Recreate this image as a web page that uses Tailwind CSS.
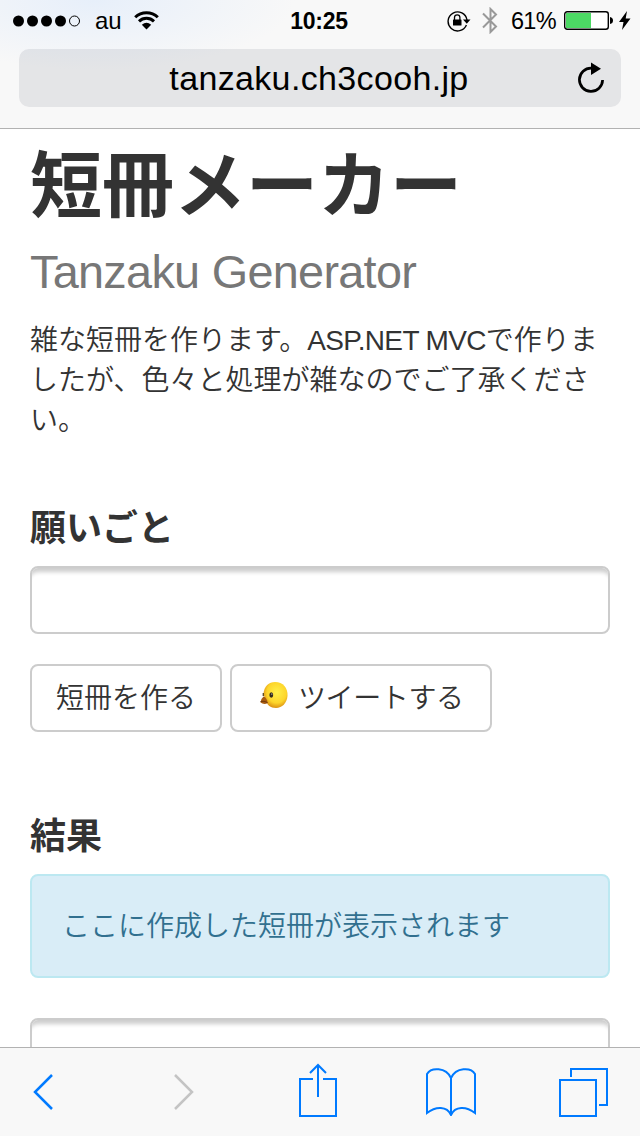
<!DOCTYPE html>
<html lang="ja">

<head>
    <meta charset="UTF-8">
    <meta name="viewport" content="width=device-width, initial-scale=1.0">
    <title>短冊メーカー</title>

    <!-- Tailwind CSS -->
    <script src="https://cdn.jsdelivr.net/npm/@tailwindcss/browser@4"></script>
</head>

<body class="font-['Liberation_Sans','Noto_Sans_CJK_JP',sans-serif] text-[28px] text-[#333] bg-white">

    <div class="flex flex-col w-[640px] h-[1136px] overflow-hidden">

        <!-- Status bar + address bar -->
        <header class="h-[129px] shrink-0 border-b border-[#b2b2b2] bg-[#f8f8f8] bg-[radial-gradient(ellipse_200px_70px_at_95px_0px,#e7effa,#f8f8f8)] text-black">
            <div class="grid grid-cols-[1fr_auto_1fr] items-center h-[41px] text-2xl leading-none">
                <div class="flex items-center pl-[13px]">
                    <svg class="w-[68px] h-3" viewBox="0 0 68 12">
                        <circle cx="5.5" cy="6" r="5.5" />
                        <circle cx="19.5" cy="6" r="5.5" />
                        <circle cx="33.5" cy="6" r="5.5" />
                        <circle cx="47.5" cy="6" r="5.5" />
                        <circle cx="61.5" cy="6" r="5" fill="none" stroke="#000" />
                    </svg>
                    <span class="ml-3.5 w-[39px]">au</span>
                    <svg class="w-[25px] h-[19px]" viewBox="0 0 25 19">
                        <path d="M1.2 6.3C7.5.1 17.5.1 23.8 6.3" fill="none" stroke="#000" stroke-width="3" />
                        <path d="M5 10.3C9.2 6.3 15.8 6.3 20 10.3" fill="none" stroke="#000" stroke-width="3" />
                        <path d="M12.5 18.5L7.8 13.7Q12.5 9.9 17.2 13.7Z" />
                    </svg>
                </div>
                <div class="font-bold text-[23px] tracking-[-0.3px] pr-0.5 pt-0.5">10:25</div>
                <div class="flex items-center justify-end pr-[9px]">
                    <svg class="w-6 h-[22px]" viewBox="0 0 24 22">
                        <path d="M19.4 15A9.5 9.5 0 1 1 20 10" fill="none" stroke="#000" stroke-width="1.4" />
                        <path d="M16 9.5h7.500l-3.700 4.200Z" />
                        <rect x="6" y="9.5" width="8.5" height="6" rx=".6" />
                        <path d="M7.5 10V7.500a2.700 2.700 0 0 1 5.400 0V10" fill="none" stroke="#000" stroke-width="1.3" />
                    </svg>
                    <svg class="w-4 h-[27px] ml-[11px]" viewBox="0 0 16 27" fill="none" stroke="#999" stroke-width="2">
                        <path d="M1 6.5L14 19.5L8.5 25V2L14 7.5L1 20.5" />
                    </svg>
                    <span class="ml-[13px] mt-0.5 w-[53px] text-[23.5px] tracking-[-0.7px]">61%</span>
                    <svg class="w-[49px] h-[19px]" viewBox="0 0 49 19">
                        <rect x=".7" y=".7" width="43.6" height="17.6" rx="2.5" fill="#fff" stroke="#000" stroke-width="1.4" />
                        <rect x="2" y="2" width="25" height="15" fill="#4cd964" />
                        <path d="M46 6q3 .5 3 3.500t-3 3.500Z" />
                    </svg>
                    <svg class="w-3 h-[19px] ml-1.5" viewBox="0 0 12 19">
                        <path d="M8 0L0 11h4.500L3 19L11.500 7.500H6.700Z" />
                    </svg>
                </div>
            </div>
            <div class="mt-2 mx-[19px] h-[58px] rounded-[10px] bg-[#00082a]/8 grid grid-cols-[1fr_auto_1fr] items-center">
                <div></div>
                <div class="text-[34px] leading-none tracking-[0.35px] pr-0.5">tanzaku.ch3cooh.jp</div>
                <svg class="w-[27px] h-[31px] justify-self-end mr-4 mb-0.5" viewBox="0 0 27 31">
                    <path d="M13.5 6.2A11.6 11.6 0 1 0 24.600 18" fill="none" stroke="#000" stroke-width="2.7" />
                    <path d="M13 .5v12.500L23 6.700Z" />
                </svg>
            </div>
        </header>

        <!-- Page -->
        <main class="flex-1 min-h-0 overflow-hidden px-[30px] pt-[17px]">
            <h1 class="text-[72px] leading-[80px] font-bold">短冊メーカー</h1>
            <p class="mt-[18px] text-[46.8px] leading-[56px] text-[#777] tracking-[-0.7px]">Tanzaku Generator</p>
            <p class="mt-[21px] leading-10 whitespace-nowrap font-[350]">
                雑な短冊を作ります。<span class="tracking-[-0.65px]">ASP.NET MVC</span>で作りま<br>
                したが、色々と処理が雑なのでご了承くださ<br>
                い。
            </p>

            <h3 class="mt-[68px] text-4xl leading-10 font-bold">願いごと</h3>
            <input type="text" class="block mt-[17px] w-full h-[68px] rounded-lg border-2 border-[#ccc] shadow-[inset_0_8px_4px_-4px_rgba(0,0,0,0.2)]">
            <div class="mt-[30px] flex gap-2">
                <button class="w-48 h-[68px] rounded-lg border-2 border-[#ccc] font-[350] pt-0.5">短冊を作る</button>
                <button class="w-[262px] h-[68px] rounded-lg border-2 border-[#ccc] font-[350] flex items-center pl-7 pt-0.5">
                    <svg class="w-7 h-7 mr-2.5 mb-2" viewBox="0 0 28 28">
                        <defs>
                            <radialGradient id="chick" cx=".55" cy=".4" r=".62">
                                <stop offset="0" stop-color="#fff04a" />
                                <stop offset=".65" stop-color="#fdd52b" />
                                <stop offset="1" stop-color="#d98b10" />
                            </radialGradient>
                        </defs>
                        <path d="M3.5 13C4 5 9 1 15 1C23 1 28 7 27.5 15C27 22 22 27 16 27C10 27 7.5 24 6 20Z" fill="url(#chick)" />
                        <path d="M3.5 15.5Q6.5 16 7.8 22Q4 24 .5 21.5Q1 17.5 3.5 15.5Z" fill="#a85c12" />
                        <path d="M.5 20.5Q4 19.5 7.5 21.5" fill="none" stroke="#70380a" />
                        <ellipse cx="11.3" cy="14" rx="1.9" ry="2.7" fill="#332b1c" />
                        <circle cx="11.8" cy="13" r=".6" fill="#fff" />
                        <path d="M3.3 12v3" stroke="#554322" stroke-width="1.3" />
                    </svg>
                    <span class="tracking-[-0.4px]">ツイートする</span>
                </button>
            </div>

            <h3 class="mt-[85px] text-4xl leading-10 font-bold">結果</h3>
            <div class="mt-[17px] h-[104px] rounded-lg border-2 border-[#bce8f1] bg-[#d9edf7] text-[#31708f] font-[350] px-[30px] pt-0.5 flex items-center">ここに作成した短冊が表示されます</div>
            <textarea class="block mt-10 w-full h-[160px] resize-none rounded-lg border-2 border-[#ccc] shadow-[inset_0_8px_4px_-4px_rgba(0,0,0,0.2)]"></textarea>
        </main>

        <!-- Toolbar -->
        <footer class="h-[89px] shrink-0 border-t border-[#b2b2b2] bg-[#f8f8f8] flex items-center pl-[33px]">
            <svg class="w-5 h-9" viewBox="0 0 20 36" fill="none" stroke="#007aff" stroke-width="2.5">
                <path d="M19 1L2 18L19 35" />
            </svg>
            <svg class="w-5 h-9 ml-[121px]" viewBox="0 0 20 36" fill="none" stroke="#c4c4c4" stroke-width="2.5">
                <path d="M1 1L18 18L1 35" />
            </svg>
            <svg class="w-[38px] h-[54px] mb-1 ml-[105px]" viewBox="0 0 38 54" fill="none" stroke="#007aff" stroke-width="2">
                <path d="M14 16H1V53H37V16H24M19 34V2M11 10L19 2L27 10" />
            </svg>
            <svg class="w-[50px] h-12 ml-[89px]" viewBox="0 0 50 48" fill="none" stroke="#007aff" stroke-width="2">
                <path d="M25 47V10C20-1 5-1 1 6V45C10 38 21 38 25 47C29 38 40 38 49 45V6C45-1 30-1 25 10" />
            </svg>
            <svg class="w-[49px] h-[49px] ml-[83px]" viewBox="0 0 49 49" fill="none" stroke="#007aff" stroke-width="2">
                <path d="M1 12H37V48H1ZM12 9V1H48V37H40" />
            </svg>
        </footer>
    </div>

</body>

</html>
